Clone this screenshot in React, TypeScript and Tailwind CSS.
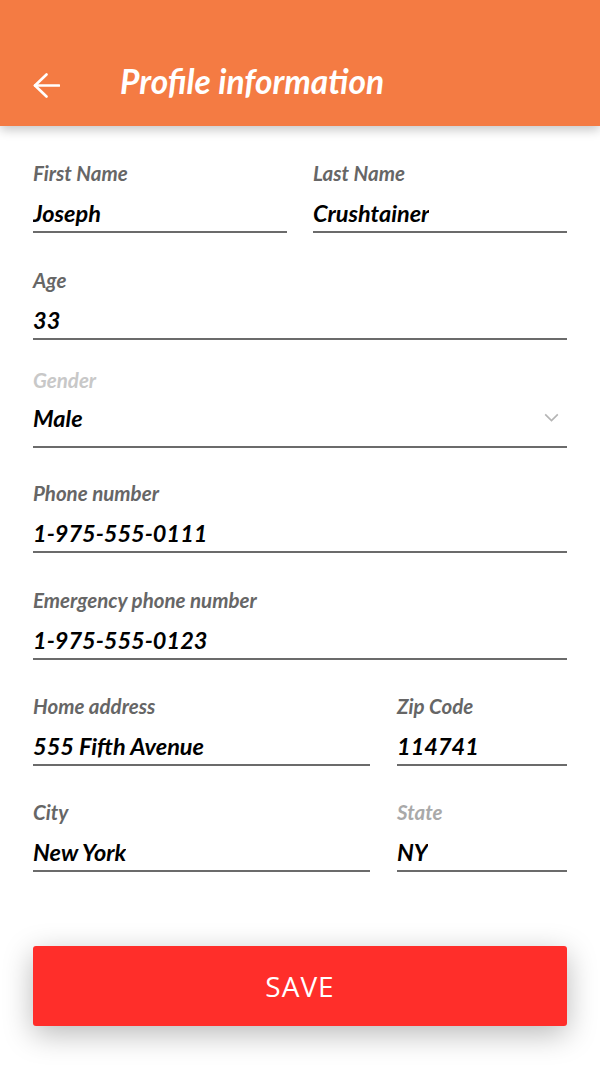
import React from "react";

const LATO = "font-['Lato',_'Liberation_Sans',_sans-serif]";

type FieldProps = {
  label: string;
  value: string;
  faint?: "light" | "lighter";
  select?: boolean;
  className?: string;
};

function Field({ label, value, faint, select, className = "" }: FieldProps) {
  const labelColor =
    faint === "lighter" ? "text-[#c8c8c8]" : faint === "light" ? "text-[#a9a9a9]" : "text-[#666666]";
  return (
    <div className={`flex flex-col min-w-0 ${className}`}>
      <div className={`h-6 leading-6 text-[20.5px] font-bold italic ${labelColor}`}>{label}</div>
      <div
        className={`flex items-center justify-between border-b-2 border-[#6b6b6b] ${
          select ? "mt-[11px] pb-[13px]" : "mt-[13px] pb-[3px]"
        }`}
      >
        <span className="h-[30px] leading-[30px] text-[23.5px] font-bold italic text-black truncate">
          {value}
        </span>
        {select ? (
          <svg
            viewBox="0 0 16 10"
            className="w-[15px] h-[9px] mr-2 -mt-[2px]"
            fill="none"
            stroke="#b5b5b5"
            strokeWidth={1.8}
            aria-hidden
          >
            <path d="M1 1.5 L8 8.5 L15 1.5" />
          </svg>
        ) : null}
      </div>
    </div>
  );
}

export default function App() {
  return (
    <div className={`w-[600px] h-[1067px] bg-white overflow-hidden flex flex-col ${LATO}`}>
      {/* App bar */}
      <header className="relative z-10 h-[126px] shrink-0 bg-[#f47b43] shadow-[0_4px_10px_rgba(0,0,0,0.22)] flex items-end pb-[28px]">
        <button className="ml-[33px] w-[27px] h-[26px] flex items-center justify-center" aria-label="Back">
          <svg viewBox="0 0 27 25" className="w-[27px] h-[25px]" fill="none" stroke="white" strokeWidth={2.6} strokeLinecap="round" strokeLinejoin="round">
            <path d="M26 12.5 H2" />
            <path d="M13.5 1.5 L2 12.5 L13.5 23.5" />
          </svg>
        </button>
        <h1 className="ml-[60px] text-[33.5px] leading-[34px] font-bold italic text-white">
          Profile information
        </h1>
      </header>

      {/* Form */}
      <main className="flex flex-col px-[33px] pt-[35px]">
        <div className="flex gap-[26px]">
          <Field label="First Name" value="Joseph" className="flex-1" />
          <Field label="Last Name" value="Crushtainer" className="flex-1" />
        </div>
        <Field label="Age" value="33" className="mt-[35px]" />
        <Field label="Gender" value="Male" faint="lighter" select className="mt-[28px]" />
        <Field label="Phone number" value="1-975-555-0111" className="mt-[33px]" />
        <Field label="Emergency phone number" value="1-975-555-0123" className="mt-[35px]" />
        <div className="flex gap-[27px] mt-[34px]">
          <Field label="Home address" value="555 Fifth Avenue" className="flex-1" />
          <Field label="Zip Code" value="114741" className="w-[170px] shrink-0" />
        </div>
        <div className="flex gap-[27px] mt-[34px]">
          <Field label="City" value="New York" className="flex-1" />
          <Field label="State" value="NY" faint="light" className="w-[170px] shrink-0" />
        </div>

        <button className="mt-[74px] h-[80px] w-full rounded-[3px] bg-[#ff2e2a] shadow-[0_8px_30px_rgba(0,0,0,0.28)] text-white text-[28px] font-medium tracking-[1px] font-['Open_Sans',_'Liberation_Sans',_sans-serif]">
          SAVE
        </button>
      </main>
    </div>
  );
}
